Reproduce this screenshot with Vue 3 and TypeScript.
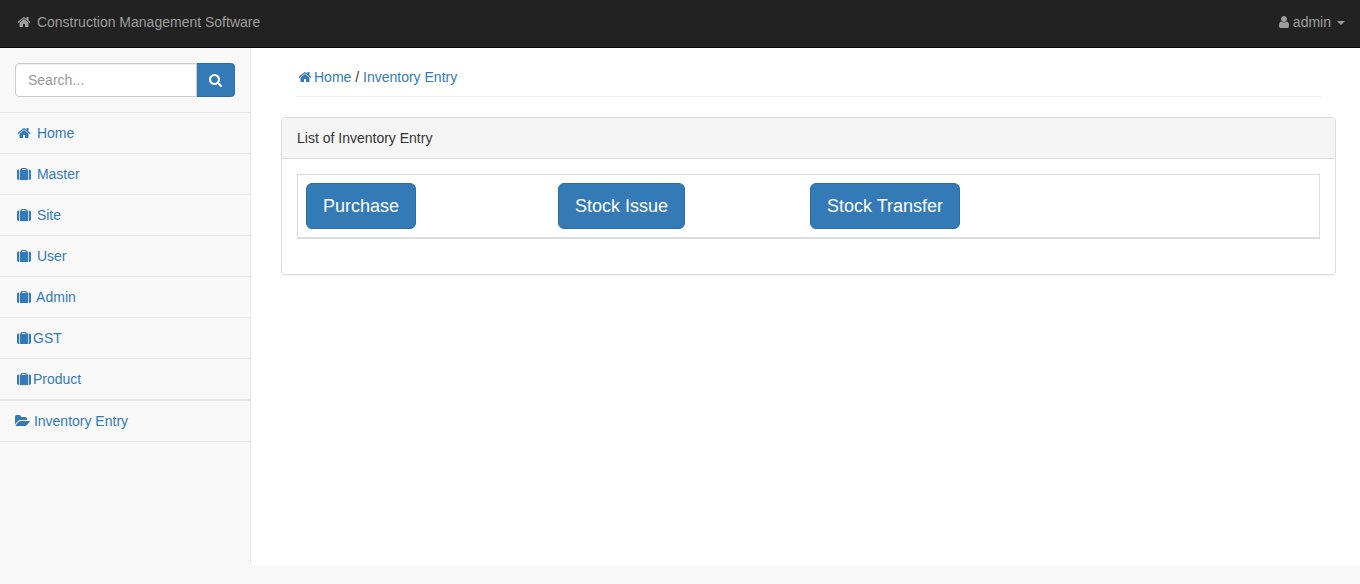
<script setup lang="ts">
import { ref } from 'vue'

type IconName = 'home' | 'suitcase' | 'folder' | 'user' | 'search'

interface MenuItem {
  label: string
  icon: IconName
  spaced: boolean
  section?: boolean
}

const icons: Record<IconName, string> = {
  home: 'M1472 992v480q0 26-19 45t-45 19h-384v-384h-256v384h-384q-26 0-45-19t-19-45v-480q0-1 .5-3t.5-3l575-474 575 474q1 2 1 6zm223-69l-62 74q-8 9-21 11h-3q-13 0-21-7l-692-577-692 577q-12 8-24 7-13-2-21-11l-62-74q-8-10-7-23.5t11-21.5l719-599q32-26 76-26t76 26l244 204v-195q0-14 9-23t23-9h192q14 0 23 9t9 23v408l219 182q10 8 11 21.5t-7 23.5z',
  suitcase: 'M288 320v1344h-64q-92 0-158-50t-66-142v-960q0-92 66-142t158-50zM384 1664v-1344h128v-128q0-64 64-64h576q64 0 64 64v128h192v1344zM640 256v128h448v-128zM1504 320h64q92 0 158 50t66 142v960q0 92-66 142t-158 50h-64z',
  folder: 'M1879 952q0 31-31 66l-336 396q-43 51-120.5 86.5t-143.5 35.5h-1088q-34 0-60.5-13t-26.5-43q0-31 31-66l336-396q43-51 120.5-86.5t143.5-35.5h1088q34 0 60.5 13t26.5 43zm-343-344v160h-832q-94 0-197 47.5t-164 119.5l-337 396-5 6q0-4-.5-12.5t-.5-12.5v-960q0-92 66-158t158-66h320q92 0 158 66t66 158v32h544q92 0 158 66t66 158z',
  user: 'M1536 1399q0 109-62.5 187t-150.5 78h-854q-88 0-150.5-78t-62.5-187q0-85 8.5-160.5t31.5-152 58.5-131 94-89 134.5-34.5q131 128 313 128t313-128q76 0 134.5 34.5t94 89 58.5 131 31.5 152 8.5 160.5zm-256-887q0 159-112.5 271.5t-271.5 112.5-271.5-112.5-112.5-271.5 112.5-271.5 271.5-112.5 271.5 112.5 112.5 271.5z',
  search: 'M1216 832q0-185-131.5-316.5t-316.5-131.5-316.5 131.5-131.5 316.5 131.5 316.5 316.5 131.5 316.5-131.5 131.5-316.5zm512 832q0 52-38 90t-90 38q-54 0-90-38l-343-342q-179 124-399 124-143 0-273.5-55.5t-225-150-150-225-55.5-273.5 55.5-273.5 150-225 225-150 273.5-55.5 273.5 55.5 225 150 150 225 55.5 273.5q0 220-124 399l343 343q37 37 37 90z',
}

const menu: MenuItem[] = [
  { label: 'Home', icon: 'home', spaced: true },
  { label: 'Master', icon: 'suitcase', spaced: true },
  { label: 'Site', icon: 'suitcase', spaced: true },
  { label: 'User', icon: 'suitcase', spaced: true },
  { label: 'Admin', icon: 'suitcase', spaced: true },
  { label: 'GST', icon: 'suitcase', spaced: false },
  { label: 'Product', icon: 'suitcase', spaced: false },
  { label: 'Inventory Entry', icon: 'folder', spaced: true, section: true },
]

const actions: string[] = ['Purchase', 'Stock Issue', 'Stock Transfer']

const query = ref('')
</script>

<template>
  <div class="page">
    <header class="navbar">
      <a href="#" class="brand">
        <svg class="icon fixed" viewBox="0 0 1792 1792" aria-hidden="true"><path :d="icons.home" /></svg>
        Construction Management Software
      </a>
      <button type="button" class="account" aria-haspopup="true">
        <svg class="icon fixed" viewBox="0 0 1792 1792" aria-hidden="true"><path :d="icons.user" /></svg>admin<span class="caret"></span>
      </button>
    </header>

    <div class="layout">
      <nav class="sidebar">
        <form class="search" role="search" @submit.prevent>
          <input v-model="query" type="text" placeholder="Search..." aria-label="Search" />
          <button type="submit" aria-label="Submit search">
            <svg class="icon glass" viewBox="64 0 1664 1792" aria-hidden="true"><path :d="icons.search" /></svg>
          </button>
        </form>
        <ul class="menu">
          <li v-for="item in menu" :key="item.label" :class="{ section: item.section }">
            <a href="#">
              <svg
                v-if="item.icon === 'folder'"
                class="icon folder"
                viewBox="0 0 1920 1792"
                aria-hidden="true"
              ><path :d="icons.folder" /></svg>
              <svg
                v-else
                class="icon fixed"
                viewBox="0 0 1792 1792"
                aria-hidden="true"
              ><path :d="icons[item.icon]" /></svg>{{ item.spaced ? ' ' : '' }}{{ item.label }}
            </a>
          </li>
        </ul>
      </nav>

      <main class="content">
        <div class="breadcrumb">
          <a href="#"><svg class="icon fixed" viewBox="0 0 1792 1792" aria-hidden="true"><path :d="icons.home" /></svg>Home</a>
          / <a href="#">Inventory Entry</a>
        </div>

        <section class="panel">
          <div class="panel-heading">List of Inventory Entry</div>
          <div class="panel-body">
            <div class="actions">
              <div v-for="action in actions" :key="action">
                <button type="button" class="action">{{ action }}</button>
              </div>
            </div>
          </div>
        </section>
      </main>
    </div>
  </div>
</template>

<style>
body {
  margin: 0;
  background: #f8f8f8;
}
</style>

<style scoped>
.page {
  box-sizing: border-box;
  display: flex;
  flex-direction: column;
  min-height: 100vh;
  padding-bottom: 19px;
  color: #333;
  font-family: 'Liberation Sans', Arial, Helvetica, sans-serif;
  font-size: 14px;
  line-height: 20px;
}

.page *,
.page *::before {
  box-sizing: border-box;
}

a {
  color: #337ab7;
  text-decoration: none;
}

button,
input {
  margin: 0;
  font: inherit;
}

button {
  cursor: pointer;
}

.icon {
  width: 14px;
  height: 14px;
  fill: currentColor;
  vertical-align: -2px;
}

.fixed {
  margin: 0 2px;
}

.folder {
  width: 15px;
}

.glass {
  width: 13px;
}

.navbar {
  display: flex;
  justify-content: space-between;
  padding: 12px 15px 15px;
  border-bottom: 1px solid #080808;
  background: #222;
}

.brand,
.account {
  color: #9d9d9d;
}

.account {
  display: flex;
  align-items: center;
  padding: 0;
  border: 0;
  background: none;
}

.caret {
  margin-top: 2px;
  margin-left: 6px;
  border-top: 4px solid;
  border-right: 4px solid transparent;
  border-left: 4px solid transparent;
}

.layout {
  display: flex;
  flex: 1;
}

.sidebar {
  flex: none;
  width: 250px;
}

.search {
  display: flex;
  padding: 15px;
  border-bottom: 1px solid #e7e7e7;
}

.search input {
  position: relative;
  z-index: 1;
  flex: 1;
  min-width: 0;
  height: 34px;
  padding: 6px 12px;
  border: 1px solid #ccc;
  border-radius: 4px 0 0 4px;
  background: #fff;
  box-shadow: inset 0 1px 1px rgba(0, 0, 0, 0.075);
  color: #555;
}

.search input::placeholder {
  color: #999;
  opacity: 1;
}

.search button {
  margin-left: -1px;
  padding: 6px 12px;
  border: 1px solid #2e6da4;
  border-radius: 0 4px 4px 0;
  background: #337ab7;
  color: #fff;
}

.menu {
  margin: 0;
  padding: 0;
  list-style: none;
}

.menu li {
  border-bottom: 1px solid #e7e7e7;
}

.menu .section {
  border-top: 1px solid #e7e7e7;
}

.menu a {
  display: block;
  padding: 10px 15px;
}

.content {
  flex: 1;
  min-width: 0;
  padding: 19px 24px 0 30px;
  border-left: 1px solid #e7e7e7;
  background: #fff;
}

.breadcrumb {
  margin: 0 15px 20px;
  padding-bottom: 9px;
  border-bottom: 1px solid #eee;
}

.panel {
  border: 1px solid #ddd;
  border-radius: 4px;
  background: #fff;
  box-shadow: 0 1px 1px rgba(0, 0, 0, 0.05);
}

.panel-heading {
  padding: 10px 15px;
  border-bottom: 1px solid #ddd;
  border-radius: 3px 3px 0 0;
  background: #f5f5f5;
}

.panel-body {
  padding: 15px 15px 35px;
}

.actions {
  display: grid;
  grid-template-columns: repeat(4, 1fr);
  padding: 8px 5px 8px 8px;
  border: 1px solid #ddd;
  border-bottom-width: 2px;
}

.action {
  display: block;
  padding: 10px 16px;
  border: 1px solid #2e6da4;
  border-radius: 6px;
  background: #337ab7;
  color: #fff;
  font-size: 18px;
  line-height: 24px;
  white-space: nowrap;
}
</style>
